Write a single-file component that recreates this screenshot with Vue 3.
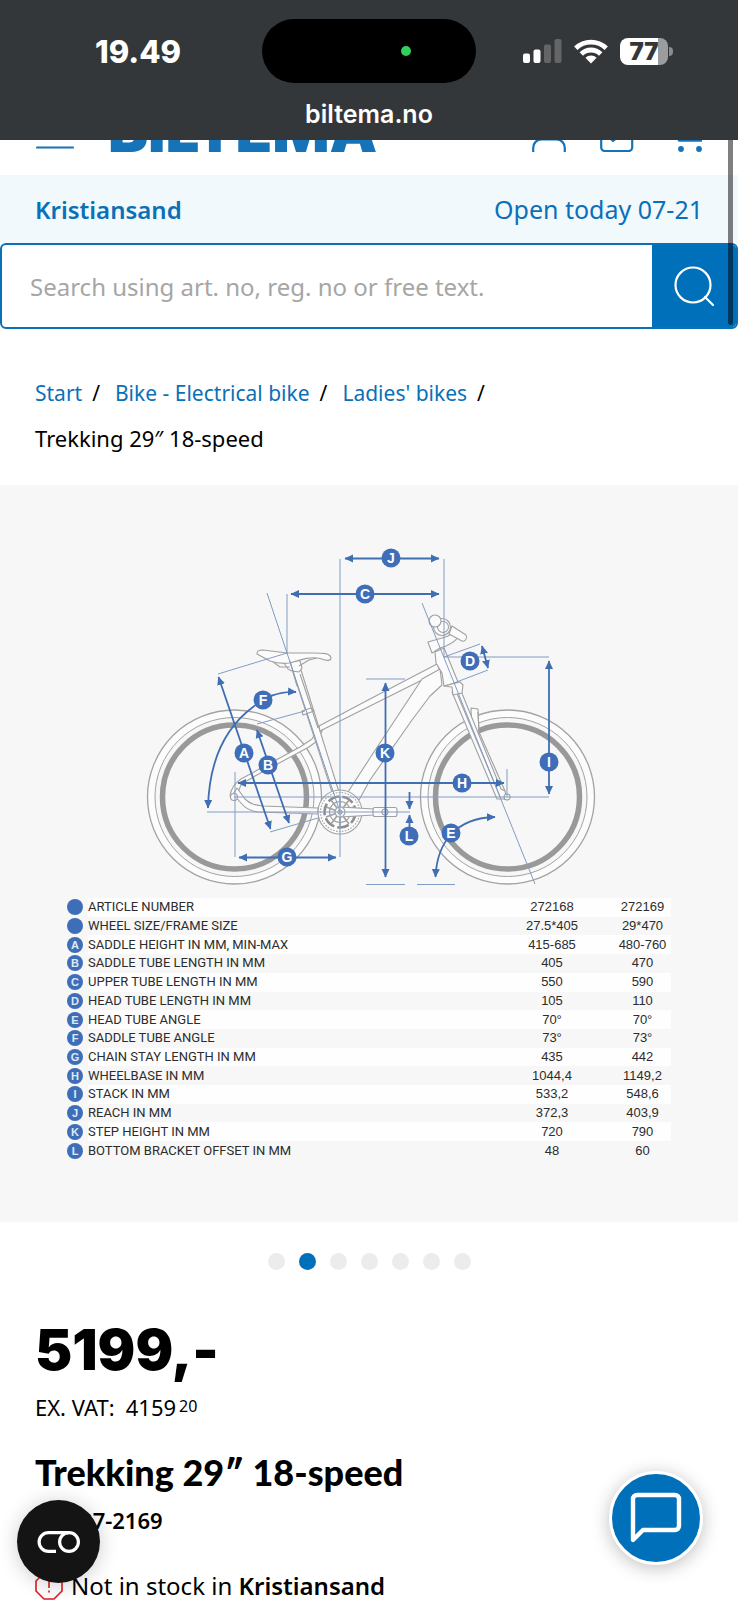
<script setup>
import { ref } from 'vue'

const query = ref('')
const activeSlide = ref(1)
const slides = 7

const crumbs = ['Start', 'Bike - Electrical bike', "Ladies' bikes"]

const rows = [
  ['', 'ARTICLE NUMBER', '272168', '272169'],
  ['', 'WHEEL SIZE/FRAME SIZE', '27.5*405', '29*470'],
  ['A', 'SADDLE HEIGHT IN MM, MIN-MAX', '415-685', '480-760'],
  ['B', 'SADDLE TUBE LENGTH IN MM', '405', '470'],
  ['C', 'UPPER TUBE LENGTH IN MM', '550', '590'],
  ['D', 'HEAD TUBE LENGTH IN MM', '105', '110'],
  ['E', 'HEAD TUBE ANGLE', '70°', '70°'],
  ['F', 'SADDLE TUBE ANGLE', '73°', '73°'],
  ['G', 'CHAIN STAY LENGTH IN MM', '435', '442'],
  ['H', 'WHEELBASE IN MM', '1044,4', '1149,2'],
  ['I', 'STACK IN MM', '533,2', '548,6'],
  ['J', 'REACH IN MM', '372,3', '403,9'],
  ['K', 'STEP HEIGHT IN MM', '720', '790'],
  ['L', 'BOTTOM BRACKET OFFSET IN MM', '48', '60'],
]

const marks = [
  ['J', 391, 558], ['C', 365, 594], ['D', 470, 661], ['F', 263, 700],
  ['A', 244, 753], ['B', 268, 765], ['K', 385, 753], ['I', 549, 762],
  ['H', 462, 783], ['L', 409, 836], ['E', 451, 833], ['G', 287, 857],
]
</script>

<template>
  <div class="page">
    <div class="status">
      <div class="status-row">
        <time class="clock">19.49</time>
        <div class="island"><span class="camera-dot"></span></div>
        <div class="indicators">
          <svg class="signal" viewBox="0 0 39 24" width="39" height="24" aria-hidden="true">
            <rect x="0" y="14.500" width="7" height="9.500" rx="2" fill="#fff" />
            <rect x="10.500" y="10.500" width="7" height="13.500" rx="2" fill="#fff" />
            <rect x="21" y="5.500" width="7" height="18.500" rx="2" fill="#636567" />
            <rect x="31.500" y="0" width="7" height="24" rx="2" fill="#636567" />
          </svg>
          <svg class="wifi" viewBox="0 0 34 25" width="34" height="25" aria-hidden="true">
            <g fill="none" stroke="#fff" stroke-width="4.800">
              <path d="M1.800 9.200a21.800 21.800 0 0 1 30.400 0" />
              <path d="M7.300 15a13.800 13.800 0 0 1 19.400 0" />
            </g>
            <path d="M17 24.500l-5.600-5.700a8 8 0 0 1 11.200 0z" fill="#fff" />
          </svg>
          <div class="battery"><span>77</span></div>
        </div>
      </div>
      <div class="address">biltema.no</div>
    </div>

    <header class="header">
      <button class="plain" type="button" aria-label="Menu">
        <svg viewBox="0 0 38 40" width="38" height="40">
          <path d="M1 9h36M1 22h36M1 35.500h36" stroke="#1773b8" stroke-width="2.200" stroke-linecap="round" />
        </svg>
      </button>
      <a class="logo" href="#">BILTEMA</a>
      <nav class="tools">
        <a href="#" aria-label="Account">
          <svg viewBox="0 0 34 40" width="34" height="40" fill="none" stroke="#1773b8" stroke-width="2.200">
            <circle cx="17" cy="12" r="9" />
            <path d="M1.200 40v-4c0-5 3.500-8.500 8.500-8.500h14.600c5 0 8.500 3.500 8.500 8.500v4" />
          </svg>
        </a>
        <a href="#" aria-label="Shopping list">
          <svg viewBox="0 0 34 40" width="34" height="40" fill="none" stroke="#1773b8" stroke-width="2.200" stroke-linejoin="round">
            <path d="M1.200 8h31v27.500a3.500 3.500 0 0 1-3.500 3.500h-24a3.500 3.500 0 0 1-3.500-3.500z" />
            <path d="M8 24l5 5 12-10" />
          </svg>
        </a>
        <a href="#" aria-label="Shopping cart">
          <svg viewBox="0 0 34 40" width="34" height="40" fill="none" stroke="#1773b8" stroke-width="2.200">
            <path d="M1 6h5l6 22h20l2-16H8" />
            <path d="M11 28.300h22" stroke-linecap="round" stroke-width="2.800" />
            <circle cx="13" cy="37" r="2.900" fill="#1773b8" stroke="none" />
            <circle cx="31" cy="37" r="2.900" fill="#1773b8" stroke="none" />
          </svg>
        </a>
      </nav>
    </header>

    <div class="store">
      <a href="#"><strong>Kristiansand</strong></a>
      <a class="hours" href="#">Open today 07-21</a>
    </div>

    <form class="search" role="search" @submit.prevent>
      <input v-model="query" type="text" aria-label="Search" placeholder="Search using art. no, reg. no or free text." />
      <button type="submit" aria-label="Search">
        <svg viewBox="0 0 42 42" width="42" height="42" fill="none" stroke="#fff" stroke-width="2.200" stroke-linecap="round">
          <circle cx="20" cy="20" r="17.500" />
          <path d="M32 32l8 8" />
        </svg>
      </button>
    </form>

    <nav class="crumbs" aria-label="Breadcrumb">
      <span v-for="c in crumbs" :key="c" class="crumb"><a href="#">{{ c }}</a><i>/</i></span>
      <span class="crumb current">Trekking 29″ 18-speed</span>
    </nav>

    <figure class="gallery">
      <svg class="diagram" viewBox="0 485 738 413" role="img" aria-label="Bicycle frame geometry">
        <defs>
          <marker id="tip" markerUnits="userSpaceOnUse" markerWidth="9" markerHeight="9" refX="8" refY="4.500" orient="auto-start-reverse">
            <path d="M0 .5L8.500 4.500L0 8.500z" fill="#3f6eb3" />
          </marker>
        </defs>

        <g fill="none" stroke="#a3a3a3">
          <g v-for="x in [234.500, 507.500]" :key="x">
            <circle :cx="x" cy="797" r="83" stroke="#fcfcfc" stroke-width="7" />
            <circle :cx="x" cy="797" r="87" stroke-width="1.300" />
            <circle :cx="x" cy="797" r="79.500" />
            <circle :cx="x" cy="797" r="72" stroke="#999" stroke-width="5.500" />
          </g>
        </g>

        <g fill="#fbfbfb" stroke="#a0a0a0" stroke-width="1.100" stroke-linejoin="round">
          <!-- stays -->
          <path d="M320 726l-8 13-12 8-59 32c-6 4-10 9-11 17l5 3 6-14c4-4 8-5 14-9l54-29 8-6 6-12z" />
          <path d="M237 788l8 11c5 5 10 6 17 7l56 2v6l-60-2c-9-1-13-4-17-9l-8-9z" />
          <!-- seat tube, top tube, down tube -->
          <path d="M293 672l39 120h7L301 670z" />
          <path d="M319 726L370 699l67-35 3 7-70 35-50 25z" />
          <path d="M422 679l-27 41-25 38-22 34 11 8 11-20 42-60 18-24 12-11-2-16z" />
          <path d="M435 652l9-4 14 34-14 4-2-13-6-10z" />
          <path d="M302 711l9-3 3 3-11 4z" />
          <!-- saddle -->
          <path d="M292 671l-4-2-4-6 6-3 10 1 2 7-3 4z" />
          <path d="M272 661l8 6h10M299 666l10-6 8-2" fill="none" />
          <path d="M257 654c0-3 1-4 6-4l24 3h25c12 0 18 0 19 5 0 3-5 3-9 1-10-3-20 0-32 4-7 1-14 0-20-2z" />
          <path d="M290 661l7 25M300 674l18 54" fill="none" />
          <!-- stem and handlebar -->
          <path d="M429 645l-1-3 14-4c8-1 10-5 12-9l4 8c-3 5-8 7-12 9l-6 2-8 5z" />
          <path d="M452 626l14 9c2 3-1 7-4 6l-13-7z" />
          <circle cx="442" cy="627" r="8.500" />
          <circle cx="443" cy="627" r="5.500" />
          <circle cx="435" cy="621" r="6" />
          <!-- fork -->
          <path d="M471 708l7 1 1 25-7-1z" />
          <path d="M452 692l45 107h10l-2-8-4-2-40-98z" />
          <path d="M456 691l45 108M478 712l1 20 26 59" fill="none" />
          <path d="M444 686l16-4 3 3-1 8-9 2-1-8z" />
          <circle cx="507" cy="797" r="3" />
          <circle cx="234" cy="797" r="3.500" />
          <!-- crankset and pedal -->
          <circle cx="340" cy="812" r="22" />
          <circle cx="340" cy="812" r="19.500" stroke-dasharray="1.500 1.500" />
          <circle cx="340" cy="812" r="15.500" stroke="#8d8d8d" stroke-width="2.600" stroke-dasharray="12 3" />
          <circle cx="340" cy="812" r="10.500" />
          <path d="M340 797v30M326 807l28 10M331 824l18-24M331 800l18 24M326 817l28-10" stroke-width="1.600" />
          <path d="M340 807l34 2v6l-34 2z" />
          <circle cx="340" cy="812" r="5" />
          <circle cx="340" cy="812" r="2" />
          <rect x="373" y="807.500" width="24" height="9" rx="2" />
          <circle cx="385" cy="812" r="3" />
        </g>

        <g fill="none" stroke="#809dc5">
          <path d="M340 559v298M444 559v98M287 594v60M235 772v85M507 769v28" />
          <path d="M267 593l73 219M422 603l113 281M218 674l69-21M444 657h105M366 679h39" />
          <path d="M444 657l36-13M454 683l34-13M257 724l48-13M270 832l48-14M207 812h203M234 797h315" />
          <path d="M366 884.500h39M417 884.500h38" />
        </g>

        <g fill="none" stroke="#3f6eb3" stroke-width="1.800">
          <g class="double">
            <path d="M345 558.500h94" />
            <path d="M291 594h148" />
            <path d="M218.500 677l52 152" />
            <path d="M257 730l32 93" />
            <path d="M239 857.500h97" />
            <path d="M238 783h266" />
            <path d="M385.500 683v194" />
            <path d="M549 661v133" />
            <path d="M482 646l6 22" />
            <path d="M208 808C209 765 222 730 253 707C266 696 280 691 296 692" />
            <path d="M435.500 877C437 842 456 818 495 817" />
          </g>
          <g class="single">
            <path d="M409.500 792v17" />
            <path d="M409.500 834v-19" />
          </g>
        </g>

        <g v-for="m in marks" :key="m[0]">
          <circle :cx="m[1]" :cy="m[2]" r="9.500" fill="#3f6eb8" />
          <text class="mark" :x="m[1]" :y="m[2] + 5">{{ m[0] }}</text>
        </g>
      </svg>

      <table class="specs">
        <tbody>
          <tr v-for="r in rows" :key="r[1]">
            <td class="key"><span class="badge">{{ r[0] }}</span></td>
            <th scope="row">{{ r[1] }}</th>
            <td class="small-frame">{{ r[2] }}</td>
            <td class="large-frame">{{ r[3] }}</td>
          </tr>
        </tbody>
      </table>
    </figure>

    <div class="dots">
      <button
        v-for="n in slides"
        :key="n"
        type="button"
        :class="{ active: n - 1 === activeSlide }"
        :aria-label="'Image ' + n"
        @click="activeSlide = n - 1"
      ></button>
    </div>

    <main class="product">
      <p class="price">5199,-</p>
      <p class="vat">EX. VAT:<span class="net">4159<sup>20</sup></span></p>
      <h1>Trekking 29″ 18-speed</h1>
      <p class="article">Art. 27-2169</p>
      <p class="stock">
        <svg viewBox="0 0 28 28" width="28" height="28" fill="none" stroke="#e0191f" stroke-width="1.600" aria-hidden="true">
          <path d="M9 1h10l8 8v10l-8 8H9l-8-8V9z" />
          <path d="M14 8v8M14 18.500v2" />
        </svg>
        <span>Not in stock in <strong>Kristiansand</strong></span>
      </p>
    </main>

    <button class="consent" type="button" aria-label="Cookie settings">
      <svg viewBox="0 0 44 24" width="44" height="24" fill="none" stroke="#fff" stroke-width="3.200">
        <path d="M32 2.600H11.500a9.400 9.400 0 0 0 0 18.800H19" />
        <circle cx="32" cy="12" r="9.400" />
      </svg>
    </button>
    <button class="chat" type="button" aria-label="Chat">
      <svg viewBox="0 0 52 52" width="52" height="52" fill="none" stroke="#fff" stroke-width="4.400" stroke-linejoin="round">
        <path d="M3 48V7a4 4 0 0 1 4-4h38a4 4 0 0 1 4 4v27a4 4 0 0 1-4 4H13z" />
      </svg>
    </button>
    <div class="scrollbar"></div>
  </div>
</template>

<style>
body {
  margin: 0;
  background: #fff;
}
</style>

<style scoped>
.page {
  position: relative;
  min-height: 100vh;
  overflow: hidden;
  box-sizing: border-box;
  font-family: "Noto Sans", "Open Sans", sans-serif;
  font-size: 24px;
  color: #000;
}
a {
  color: #0a70b8;
  text-decoration: none;
}
button {
  border: 0;
  padding: 0;
  cursor: pointer;
}
svg {
  display: block;
}
p,
h1,
figure {
  margin: 0;
}

.status {
  height: 140px;
  box-sizing: border-box;
  padding-top: 19px;
  background: #343739;
  color: #fff;
  font-family: Inter, sans-serif;
}
.status-row {
  display: grid;
  grid-template-columns: 1fr 214px 1fr;
  align-items: center;
}
.clock {
  padding-left: 14px;
  text-align: center;
  font-size: 31px;
  font-weight: 800;
}
.island {
  height: 64px;
  border-radius: 32px;
  background: #000;
  display: flex;
  align-items: center;
  justify-content: flex-end;
}
.camera-dot {
  width: 10px;
  height: 10px;
  margin-right: 65px;
  border-radius: 50%;
  background: #30d158;
}
.indicators {
  display: flex;
  align-items: center;
  justify-content: flex-end;
  gap: 12px;
  padding-right: 70px;
}
.battery {
  position: relative;
  width: 48px;
  height: 27px;
  border-radius: 8px;
  background: linear-gradient(90deg, #fff 38px, #9b9c9e 38px);
  color: #343739;
  font-size: 24px;
  line-height: 27px;
  font-weight: 900;
  text-align: center;
}
.battery::after {
  content: "";
  position: absolute;
  left: 49px;
  top: 9px;
  width: 4px;
  height: 9px;
  border-radius: 0 4px 4px 0;
  background: #8b8d8f;
}
.address {
  margin-top: 15px;
  text-align: center;
  font-size: 25px;
  line-height: 32px;
  font-weight: 600;
}

.header {
  height: 35px;
  box-sizing: border-box;
  padding: 0 36px 23px;
  display: flex;
  align-items: flex-end;
  overflow: hidden;
}
.plain {
  background: none;
}
.logo {
  margin-left: 34px;
  height: 44px;
  font-family: Inter, sans-serif;
  font-size: 60px;
  line-height: 44px;
  font-weight: 900;
  color: #1773b8;
}
.tools {
  margin-left: auto;
  display: flex;
  gap: 34px;
}

.store {
  height: 68px;
  padding: 0 35px;
  display: flex;
  align-items: center;
  justify-content: space-between;
  background: #f1f9fd;
}
.store strong {
  font-weight: 600;
}
.store .hours {
  font-size: 25px;
}

.search {
  height: 86px;
  box-sizing: border-box;
  display: flex;
  border: 2px solid #0a70b8;
  border-radius: 6px;
  overflow: hidden;
  background: #fff;
}
.search input {
  flex: 1;
  min-width: 0;
  border: 0;
  outline: 0;
  padding: 0 28px;
  font: inherit;
  background: none;
}
.search input::placeholder {
  color: #a6a6a6;
  opacity: 1;
}
.search button {
  width: 84px;
  display: flex;
  align-items: center;
  justify-content: center;
  background: #0070ba;
}

.crumbs {
  display: flex;
  flex-wrap: wrap;
  padding: 42px 35px 24px;
  font-size: 21px;
  line-height: 45px;
}
.crumb i {
  margin: 0 15px 0 10px;
  font-style: normal;
}
.current {
  font-size: 22px;
}

.gallery {
  background: #f7f7f7;
  padding-bottom: 62px;
}
.diagram {
  width: 100%;
}
.double path {
  marker-start: url(#tip);
  marker-end: url(#tip);
}
.single path {
  marker-end: url(#tip);
}
.mark {
  font: 700 14px "Liberation Sans", sans-serif;
  fill: #fff;
  text-anchor: middle;
}
.specs {
  width: calc(100% - 134px);
  height: 262px;
  margin: 0 67px;
  border-collapse: collapse;
  font-family: "Liberation Sans", sans-serif;
  font-size: 13px;
  line-height: 16px;
  color: #2c2c2c;
}
.specs td,
.specs th {
  padding: 0;
  text-align: center;
  font-weight: 400;
}
.specs th {
  text-align: left;
  font-family: Roboto, sans-serif;
}
.specs .key {
  width: 21px;
}
.specs .small-frame {
  width: 124px;
}
.specs .large-frame {
  width: 57px;
}
.specs tr:nth-child(odd) > :not(.key) {
  background: #fefefe;
}
.badge {
  display: block;
  width: 16px;
  height: 16px;
  border-radius: 50%;
  background: #3f6eb8;
  color: #dfe9f7;
  font-size: 11px;
  font-weight: 700;
}

.dots {
  display: flex;
  justify-content: center;
  gap: 14px;
  padding: 31px 0 30px;
}
.dots button {
  width: 17px;
  height: 17px;
  border-radius: 50%;
  background: #ececec;
}
.dots .active {
  background: #0070ba;
}

.product {
  padding: 10px 35px 0;
}
.price {
  font-family: Inter, sans-serif;
  font-size: 56px;
  line-height: 80px;
  font-weight: 900;
}
.vat {
  font-size: 22px;
  line-height: 34px;
}
.net {
  margin-left: 11px;
}
.vat sup {
  margin-left: 3px;
  font-size: 16px;
  line-height: 0;
  vertical-align: 4px;
}
h1 {
  margin-top: 28px;
  font-family: Lato, sans-serif;
  font-size: 36px;
  line-height: 40px;
  font-weight: 900;
}
.article {
  margin-top: 12px;
  font-size: 22px;
  line-height: 32px;
  font-weight: 600;
}
.stock {
  display: flex;
  align-items: center;
  gap: 8px;
  height: 28px;
  margin-top: 36px;
  font-size: 24px;
  line-height: 28px;
}
.stock strong {
  font-weight: 600;
}

.consent,
.chat {
  position: fixed;
  display: flex;
  align-items: center;
  justify-content: center;
  border-radius: 50%;
}
.consent {
  left: 17px;
  bottom: 17px;
  width: 83px;
  height: 83px;
  background: #141414;
  box-shadow: 0 2px 20px rgba(0, 0, 0, 0.2);
}
.chat {
  right: 35px;
  bottom: 35px;
  width: 94px;
  height: 94px;
  box-sizing: border-box;
  border: 3px solid #fff;
  background: #0070ba;
  box-shadow: 0 3px 18px rgba(0, 0, 0, 0.25);
}
.scrollbar {
  position: fixed;
  top: 140px;
  right: 5px;
  width: 5px;
  height: 185px;
  border-radius: 0 0 3px 3px;
  background: rgba(0, 0, 0, 0.5);
}
</style>
